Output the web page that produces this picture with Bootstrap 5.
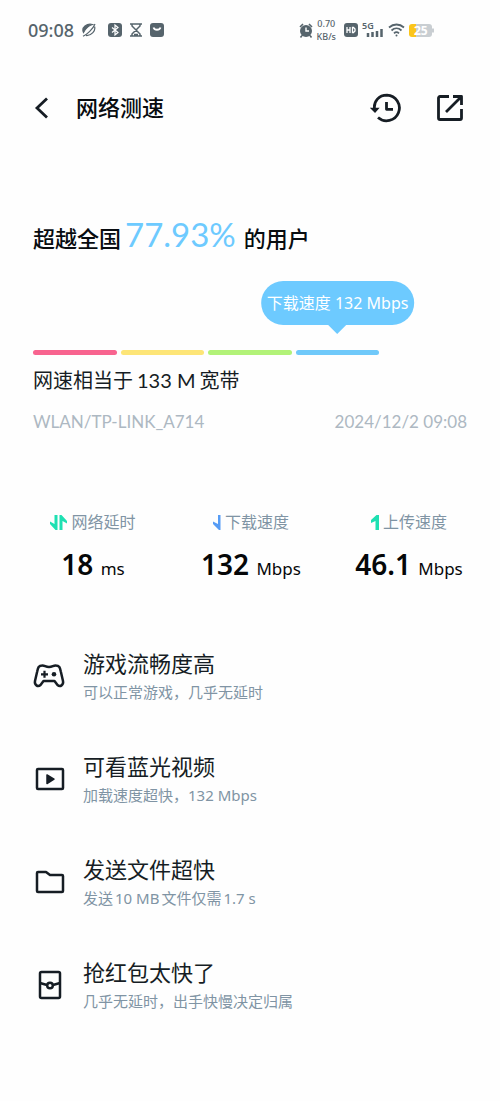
<!DOCTYPE html>
<html lang="zh-CN">
<head>
<meta charset="utf-8">
<meta name="viewport" content="width=device-width, initial-scale=1">
<title>网络测速</title>
<link href="https://cdn.jsdelivr.net/npm/bootstrap@5.3.0/dist/css/bootstrap.min.css" rel="stylesheet">
<style>
  :root { --ink:#161d24; --muted:#8094a4; --faint:#adb8c2; --sky:#6dcaff; --status:#56646c; }
  body { font-family:Lato,"Noto Sans CJK SC",sans-serif; color:var(--ink); background:#fefefe; }
  svg { display:block; flex:none; }
  .statusbar { height:60px; padding:0 66px 0 28px; color:var(--status); }
  .clock { font:500 18px/24px "Noto Sans","Noto Sans CJK SC",sans-serif; }
  .rate { font:500 9px/13px "Noto Sans",sans-serif; text-align:center; }
  .topbar { height:96px; padding:0 36px 0 34px; }
  .topbar h1 { margin-left:26px; font-size:22px; line-height:32px; font-weight:500; color:#080c10; }
  .icon-btn { padding:0; border:0; color:var(--ink); }
  .share { margin-left:34px; }
  .page { padding:0 33px; }
  .rank { margin-top:54px; font-size:22px; line-height:48px; font-weight:500; color:#080c10; }
  .rank strong { font-size:33px; font-weight:400; color:var(--sky); }
  .meter { gap:4px; margin-top:87px; }
  .seg { flex:1; height:5px; border-radius:3px; }
  .bubble { position:absolute; bottom:30px; left:50%; transform:translateX(-50%); height:44px; padding:0 6px; border-radius:22px; background:var(--sky); color:#fff; font:400 16px/44px "Noto Sans","Noto Sans CJK SC",sans-serif; white-space:nowrap; }
  .bubble::after { content:""; position:absolute; top:43px; left:50%; margin-left:-10px; border:10px solid transparent; border-bottom:0; border-top-color:var(--sky); }
  .equiv { margin-top:10px; font-size:20px; line-height:30px; }
  .equiv span { margin:0 4px; }
  .meta { margin-top:15px; font-size:17px; line-height:24px; color:var(--faint); }
  .stats { margin-top:76px; padding:0 12px 0 14px; }
  .stat-label { gap:4px; font-size:16px; line-height:24px; color:var(--muted); font-weight:400; }
  .stat-value { margin-top:12px; font:600 28px/36px "Noto Sans",sans-serif; color:#050708; white-space:nowrap; }
  .stat-value small { font-size:17px; font-weight:400; }
  .features { margin-top:61px; gap:47px; padding-bottom:80px; }
  .feature { gap:18px; }
  .feature h2 { margin:0; font-size:22px; line-height:32px; font-weight:400; }
  .feature p { margin:0; font:400 15px/24px "Noto Sans","Noto Sans CJK SC",sans-serif; color:var(--muted); }
  .feature p span { margin:0 2px; }
</style>
</head>
<body>
<div class="statusbar d-flex align-items-center justify-content-between">
  <div class="d-flex align-items-center gap-2">
    <span class="clock">09:08</span>
    <svg width="14" height="14" viewBox="0 0 14 14" fill="none" stroke="currentColor" stroke-width="1.200"><path d="M1.500 9.500C-1 4.500 5 0 10.500 1.500 7 2.500 3.500 5.500 1.500 9.500z" fill="currentColor"/><path d="M12.500 3.500c1.500 4-3 9.500-8.500 9"/><path d="M1 13.300C5 11.500 11 6 13 1"/></svg>
    <svg class="ms-1" width="14" height="14" viewBox="0 0 14 14"><rect width="14" height="14" rx="3" fill="currentColor"/><path d="M4 4.500l6 5L7 12V2l3 2.500-6 5" fill="none" stroke="#fff" stroke-width="1.200"/></svg>
    <svg width="12" height="14" viewBox="0 0 12 14" fill="none" stroke="currentColor" stroke-width="1.500"><path d="M0 1h12M0 13h12M2 1v2l8 8v2M10 1v2l-8 8v2M4 11.500h4"/></svg>
    <svg width="14" height="14" viewBox="0 0 14 14"><rect width="14" height="14" rx="3" fill="currentColor"/><path d="M3.500 4.500c1 3 6 3 7 0" fill="none" stroke="#fff" stroke-width="1.800"/></svg>
  </div>
  <div class="d-flex align-items-center gap-1">
    <svg width="14" height="15" viewBox="0 0 14 15"><circle cx="7" cy="8" r="6" fill="currentColor"/><path d="M1 4l3-3M13 4l-3-3M3 12.500l-1.500 2M11 12.500l1.500 2" stroke="currentColor" stroke-width="1.600"/><path d="M7 4.500V8h3" fill="none" stroke="#fff" stroke-width="1.400"/></svg>
    <div class="rate"><div>0.70</div><div>KB/s</div></div>
    <svg class="ms-1" width="14" height="14" viewBox="0 0 14 14"><rect width="14" height="14" rx="3" fill="currentColor"/><path d="M3 4v6M6 4v6M3 7h3M8.500 4.500h1L11 6v2L9.500 9.500h-1z" fill="none" stroke="#fff" stroke-width="1.300"/></svg>
    <svg width="22" height="24" viewBox="0 0 22 24"><text x="0" y="11" font-family="Noto Sans" font-size="9" font-weight="600" fill="currentColor">5G</text><path d="M6 19v-4M10.500 19v-5M15 19v-6M19.500 19v-8" stroke="currentColor" stroke-width="2.500"/></svg>
    <svg width="17" height="14" viewBox="0 0 17 14" fill="none" stroke="currentColor" stroke-width="1.800"><path d="M1 4.500c4.500-4 10.500-4 15 0M3.500 7.500c3-2.800 7-2.800 10 0M6 10.300c1.500-1.400 3.500-1.400 5 0"/><circle cx="8.500" cy="12.500" r="1" fill="currentColor" stroke="none"/></svg>
    <svg width="25" height="21" viewBox="0 0 25 21"><path d="M3 4h17a3 3 0 013 3v7a3 3 0 01-3 3H3z" fill="#c9ced2"/><path d="M3 4h4v13H3a3 3 0 01-3-3V7a3 3 0 013-3z" fill="#fbc51b"/><path d="M24 8.500v4" stroke="#c9ced2" stroke-width="2"/><text x="5" y="15" font-family="Noto Sans" font-size="12" font-weight="700" fill="#fff">25</text></svg>
  </div>
</div>

<header class="topbar d-flex align-items-center">
  <button class="btn icon-btn" type="button" aria-label="返回"><svg width="16" height="22" viewBox="0 0 16 22" fill="none" stroke="currentColor" stroke-width="2.800"><path d="M13 1.500L3 11l10 9.500"/></svg></button>
  <h1 class="mb-0">网络测速</h1>
  <button class="btn icon-btn ms-auto" type="button" aria-label="历史记录"><svg width="32" height="30" viewBox="0 0 32 30" fill="none" stroke="currentColor" stroke-width="2.800"><path d="M4.500 16C3.500 8 9 2.200 17 2.200A12.800 12.800 0 1 1 8 24.500M16.500 9v7.300h6.500" stroke-linejoin="round"/><path d="M1.500 15.500h6.500L5 19z" fill="currentColor" stroke-width="1.500"/></svg></button>
  <button class="btn icon-btn share" type="button" aria-label="分享"><svg width="28" height="26" viewBox="0 0 28 26" fill="none" stroke="currentColor" stroke-width="2.800"><path d="M13 1.500H4A1.500 1.500 0 002.500 3v20A1.500 1.500 0 004 24.500h20a1.500 1.500 0 001.500-1.500v-9M10 17L25 2M17 1.500h8.500V10" stroke-linejoin="round"/></svg></button>
</header>

<main>
  <section class="page">
    <div class="rank d-flex align-items-baseline"><span>超越全国</span><strong class="ms-1 me-2">77.93%</strong><span>的用户</span></div>
    <div class="meter d-flex">
      <div class="seg" style="background:#f8648f"></div>
      <div class="seg" style="background:#fde577"></div>
      <div class="seg" style="background:#b2f278"></div>
      <div class="seg position-relative" style="background:#70c9fa"><div class="bubble">下载速度 132 Mbps</div></div>
      <div class="seg"></div>
    </div>
    <div class="equiv">网速相当于<span>133 M</span>宽带</div>
    <div class="meta d-flex justify-content-between"><span>WLAN/TP-LINK_A714</span><span>2024/12/2 09:08</span></div>
  </section>

  <section class="stats row g-0 text-center">
    <div class="col">
      <div class="stat-label d-flex justify-content-center align-items-center"><svg width="17" height="17" viewBox="0 0 17 17"><path d="M4.500 1h3v15h-2L0 10V7.500l4.500 2.500zM9.500 1h2L17 7v2.500L12.500 7v9h-3z" fill="#1ee0b2"/></svg>网络延时</div>
      <div class="stat-value">18 <small>ms</small></div>
    </div>
    <div class="col">
      <div class="stat-label d-flex justify-content-center align-items-center"><svg width="8" height="17" viewBox="0 0 8 17"><path d="M5 1h2.500v15H6L0 10V7.500L5 10z" fill="#569cf5"/></svg>下载速度</div>
      <div class="stat-value">132 <small>Mbps</small></div>
    </div>
    <div class="col">
      <div class="stat-label d-flex justify-content-center align-items-center"><svg width="8" height="17" viewBox="0 0 8 17"><path d="M8 1v15H4.500V7L0 9V6l5.500-5z" fill="#1ee0b2"/></svg>上传速度</div>
      <div class="stat-value">46.1 <small>Mbps</small></div>
    </div>
  </section>

  <section class="features page d-flex flex-column">
    <div class="feature d-flex align-items-center">
      <svg width="32" height="32" viewBox="0 0 32 32" fill="none" stroke="currentColor" stroke-width="2.500" stroke-linejoin="round"><path d="M9.500 5.500c2.500 0 3 1.500 6.500 1.500s4-1.500 6.500-1.500c4 0 4.500 2 5.300 6l2.200 9.500c.8 4-2.800 6.300-5.500 4L21.500 21h-11L7.500 25C4.800 27.300 1.200 25 2 21l2.200-9.500c.8-4 1.300-6 5.300-6z"/><path d="M11.500 10.800v7M8 14.300h7" stroke-width="2.200"/><circle cx="21" cy="14.300" r="2.300" fill="currentColor" stroke="none"/></svg>
      <div><h2>游戏流畅度高</h2><p>可以正常游戏，几乎无延时</p></div>
    </div>
    <div class="feature d-flex align-items-center">
      <svg width="32" height="32" viewBox="0 0 32 32" fill="none" stroke="currentColor" stroke-width="2.500" stroke-linejoin="round"><rect x="4" y="6" width="26" height="20" rx="1"/><path d="M14 12v8.500l7-4.300z" fill="currentColor" stroke-width="1.500"/></svg>
      <div><h2>可看蓝光视频</h2><p>加载速度超快，132 Mbps</p></div>
    </div>
    <div class="feature d-flex align-items-center">
      <svg width="32" height="32" viewBox="0 0 32 32" fill="none" stroke="currentColor" stroke-width="2.500" stroke-linejoin="round"><path d="M5 6h8l4 3h12a1 1 0 011 1v15a1 1 0 01-1 1H5a1 1 0 01-1-1V7a1 1 0 011-1z"/></svg>
      <div><h2>发送文件超快</h2><p>发送<span>10 MB</span>文件仅需<span>1.7 s</span></p></div>
    </div>
    <div class="feature d-flex align-items-center">
      <svg width="32" height="32" viewBox="0 0 32 32" fill="none" stroke="currentColor" stroke-width="2.500" stroke-linejoin="round"><rect x="7" y="3" width="20" height="26" rx="1.500"/><path d="M7 14l7 2M20 16l7-2"/><circle cx="17" cy="16.500" r="2.800"/></svg>
      <div><h2>抢红包太快了</h2><p>几乎无延时，出手快慢决定归属</p></div>
    </div>
  </section>
</main>
<script src="https://cdn.jsdelivr.net/npm/bootstrap@5.3.0/dist/js/bootstrap.bundle.min.js"></script>
</body>
</html>
